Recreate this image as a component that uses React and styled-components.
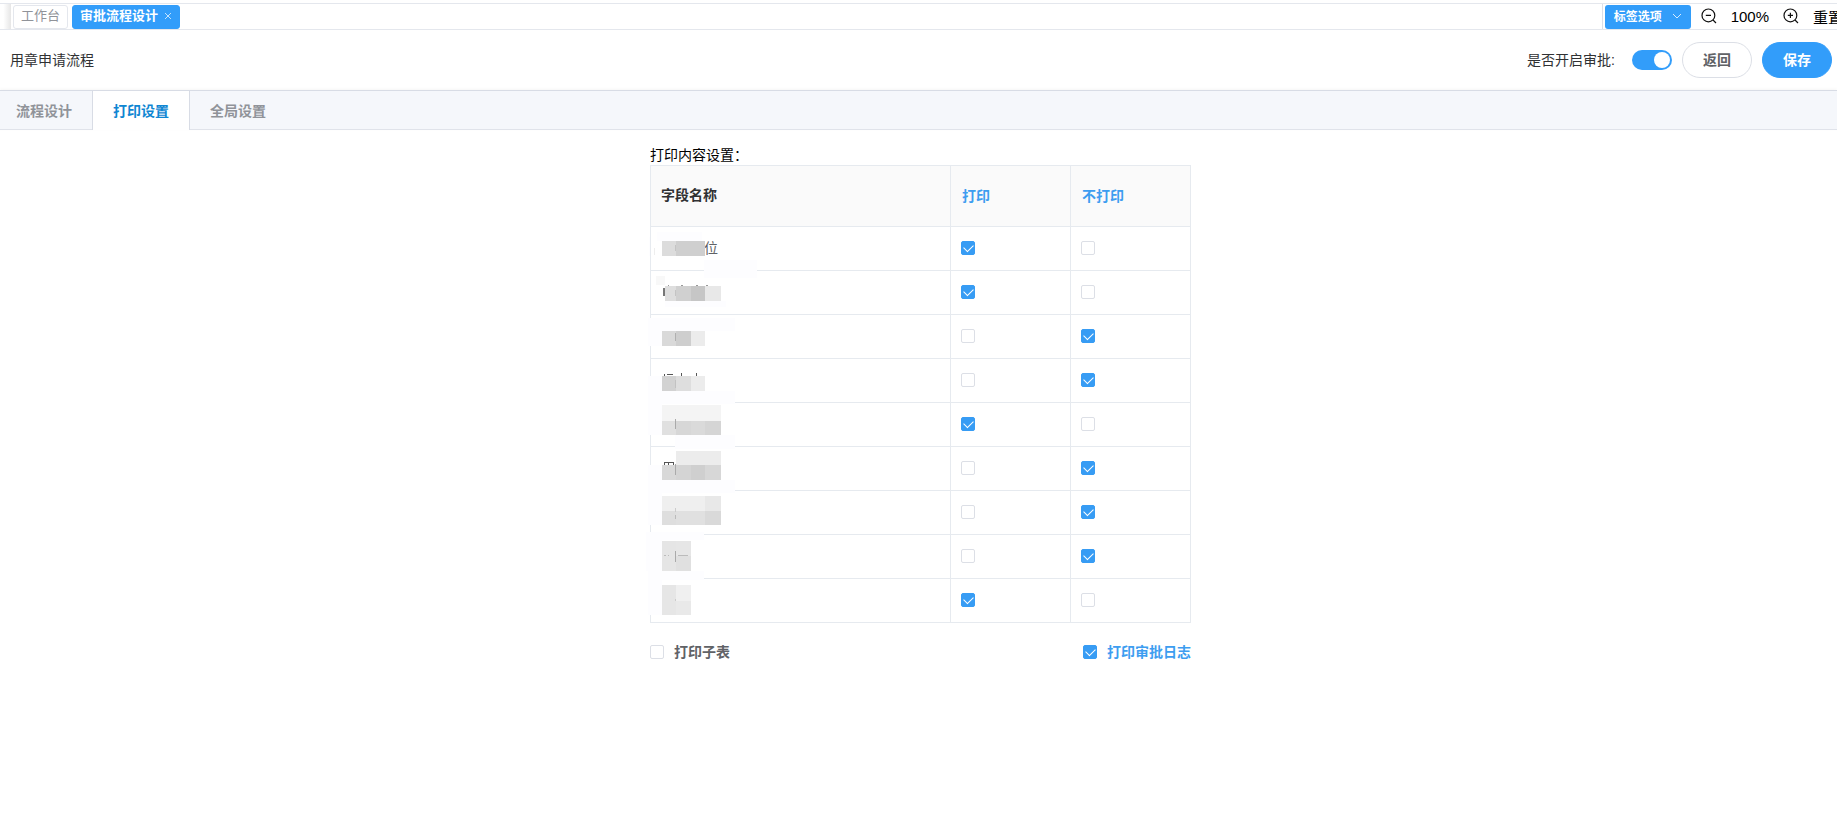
import React, { useState } from 'react';
import styled, { createGlobalStyle } from 'styled-components';

const GlobalStyle = createGlobalStyle`
  * {
    box-sizing: border-box;
  }

  body {
    margin: 0;
    background: #fff;
    color: #303133;
    font-family: 'Liberation Sans', 'Noto Sans CJK SC', sans-serif;
    font-size: 14px;
    line-height: 20px;
    overflow-x: hidden;
  }

  button,
  input {
    font-family: inherit;
    margin: 0;
  }
`;

const blue = '#329dfa';

const TagBar = styled.nav`
  display: flex;
  align-items: center;
  height: 27px;
  margin-top: 3px;
  border-top: 1px solid #e4e7ed;
  border-bottom: 1px solid #e4e7ed;
  overflow: hidden;
  white-space: nowrap;
`;

const ScrollEdge = styled.div`
  width: 11px;
  height: 25px;
  margin-right: 2px;
  background: linear-gradient(to right, #fff 30%, #e6e6e6);
`;

const Tag = styled.a`
  display: flex;
  align-items: center;
  gap: 6px;
  height: 24px;
  padding: 0 7px 2px;
  margin-right: 4px;
  border: 1px solid ${p => (p.$active ? blue : '#e4e7ed')};
  border-radius: 3px;
  background: ${p => (p.$active ? blue : '#fff')};
  color: ${p => (p.$active ? '#fff' : '#909399')};
  font-size: 13px;
  font-weight: ${p => (p.$active ? 700 : 400)};
  text-decoration: none;
`;

const TagTools = styled.div`
  display: flex;
  align-items: center;
  height: 25px;
  margin-left: auto;
  padding-left: 2px;
  border-left: 1px solid #dcdfe6;
`;

const TagOptions = styled.button`
  display: flex;
  align-items: center;
  justify-content: space-between;
  width: 86px;
  height: 24px;
  padding: 0 9px 2px;
  border: 0;
  border-radius: 3px;
  background: ${blue};
  color: #fff;
  font-size: 12px;
  font-weight: 700;
`;

const ZoomButton = styled.button`
  display: flex;
  width: 16px;
  height: 16px;
  padding: 0;
  margin: 0 14px 2px ${p => (p.$last ? 14 : 10)}px;
  border: 0;
  background: none;
  color: #111;
`;

const ZoomLevel = styled.span`
  color: #000;
  font-size: 15px;
`;

const ResetButton = styled.button`
  width: 24px;
  padding: 0;
  border: 0;
  background: none;
  color: #000;
  font-size: 15px;
  overflow: hidden;
  text-align: left;
  white-space: nowrap;
`;

const Header = styled.header`
  display: flex;
  align-items: center;
  gap: 10px;
  height: 60px;
  padding: 0 5px 0 10px;
`;

const Title = styled.h1`
  margin: 0 auto 0 0;
  font-size: 14px;
  font-weight: 400;
`;

const SwitchLabel = styled.label`
  display: flex;
  align-items: center;
  gap: 17px;
`;

const Switch = styled.input`
  appearance: none;
  display: flex;
  align-items: center;
  justify-content: flex-start;
  width: 40px;
  height: 20px;
  padding: 0 2px;
  border-radius: 10px;
  background: #dcdfe6;

  &::after {
    content: '';
    width: 16px;
    height: 16px;
    border-radius: 50%;
    background: #fff;
  }

  &:checked {
    justify-content: flex-end;
    background: ${blue};
  }
`;

const RoundButton = styled.button`
  width: 70px;
  height: 36px;
  padding: 0 0 2px;
  border: 1px solid ${p => (p.$primary ? blue : '#dcdfe6')};
  border-radius: 18px;
  background: ${p => (p.$primary ? blue : '#fff')};
  color: ${p => (p.$primary ? '#fff' : '#606266')};
  font-size: 14px;
  font-weight: 700;
`;

const Tabs = styled.nav`
  display: flex;
  height: 40px;
  padding-left: 16px;
  border-top: 1px solid #d8dce5;
  border-bottom: 1px solid #e0e3ea;
  background: #f5f7fb;
  box-shadow: 0 -1px 3px rgba(0, 0, 0, 0.04);
`;

const Tab = styled.button`
  height: 39px;
  padding: 0 20px 2px;
  border: solid #d8dce5;
  border-width: 0 ${p => (p.$active ? '1px' : 0)};
  background: ${p => (p.$active ? '#fff' : 'none')};
  color: ${p => (p.$active ? '#0f86d2' : '#909399')};
  font-size: 14px;
  font-weight: 700;

  &:first-child {
    padding-left: 0;
  }
`;

const Panel = styled.main`
  width: 545px;
  max-width: 100%;
  margin: 15px auto 0;
  padding-left: 4px;
`;

const PanelTitle = styled.h2`
  margin: 0;
  color: #000;
  font-size: 14px;
  font-weight: 400;
`;

const Table = styled.table`
  width: 100%;
  table-layout: fixed;
  border-collapse: separate;
  border-spacing: 0;
  border: solid #e6eaef;
  border-width: 1px 0 0 1px;
`;

const HeadCell = styled.th`
  width: ${p => (p.$wide ? 'auto' : '120px')};
  height: 61px;
  padding: ${p => (p.$wide ? '0 10px 2px' : '0 11px')};
  border: solid #e6eaef;
  border-width: 0 1px 1px 0;
  background: #fafafa;
  color: ${p => (p.$wide ? '#303133' : '#3d9df0')};
  text-align: left;
  font-weight: 700;
`;

const Cell = styled.td`
  position: relative;
  height: 44px;
  padding: 0 10px 2px;
  border: solid #e6eaef;
  border-width: 0 1px 1px 0;
  color: #606266;
`;

const Suffix = styled.span`
  padding-left: 43px;
`;

// Sits over the name cell and its left and bottom borders
const MaskSvg = styled.svg`
  position: absolute;
  left: -6px;
  top: -1px;
  pointer-events: none;
`;

const Checkbox = styled.input`
  appearance: none;
  display: grid;
  place-items: center;
  width: 14px;
  height: 14px;
  border: 1px solid #dcdfe6;
  border-radius: 2px;
  background: #fff;

  &:checked {
    border-color: #379cf4;
    background: #379cf4;
  }

  &:checked::after {
    content: '';
    width: 8px;
    height: 5px;
    margin-bottom: 2px;
    border: solid #fff;
    border-width: 0 0 1px 1px;
    transform: rotate(-45deg);
  }
`;

const Options = styled.div`
  display: flex;
  justify-content: space-between;
  margin-top: 19px;
`;

const Option = styled.label`
  display: flex;
  align-items: center;
  gap: 10px;
  color: ${p => (p.$checked ? '#3d9df0' : '#606266')};
  font-weight: 700;
`;

const veil = '#fdfdff';

// Blocks are [x, y, width, height, fill], measured from the row's top left corner
const initialRows = [
  {
    suffix: '位',
    print: true,
    blocks: [
      [-1, 11, 1, 19, veil],
      [4, 22, 1, 7, '#eee'],
      [7, 6, 45, 9, veil],
      [54, 34, 53, 18, veil],
      [12, 15, 14, 15, '#dcdcdc'],
      [26, 15, 29, 15, '#cfcfcf'],
      [25, 19, 1, 6, '#c4c4c4'],
    ],
  },
  {
    print: true,
    blocks: [
      [6, 6, 9, 9, '#f8f8f8'],
      [15, 31, 61, 6, veil],
      [13, 18, 2, 8, '#777'],
      [18, 15, 1, 1, '#999'],
      [31, 15, 2, 1, '#999'],
      [46, 15, 2, 1, '#999'],
      [56, 15, 2, 1, '#999'],
      [15, 16, 11, 15, '#dedede'],
      [26, 16, 15, 15, '#d0d0d0'],
      [41, 16, 14, 15, '#c6c6c6'],
      [55, 16, 16, 15, '#e8e8e8'],
      [25, 20, 1, 6, '#c4c4c4'],
    ],
  },
  {
    print: false,
    blocks: [
      [-2, 4, 87, 13, veil],
      [-2, 17, 14, 15, veil],
      [12, 17, 14, 15, '#d9d9d9'],
      [26, 17, 15, 15, '#cecece'],
      [41, 17, 14, 15, '#ececec'],
      [25, 19, 1, 8, '#b0b0b0'],
    ],
  },
  {
    print: false,
    blocks: [
      [-2, 18, 14, 15, veil],
      [-2, 33, 87, 13, veil],
      [14, 16, 1, 2, '#555'],
      [17, 16, 6, 1, '#555'],
      [31, 15, 1, 3, '#555'],
      [46, 15, 1, 3, '#555'],
      [12, 18, 14, 15, '#d2d2d2'],
      [26, 18, 15, 15, '#dedede'],
      [41, 18, 14, 15, '#ececec'],
      [25, 22, 1, 8, '#c2c2c2'],
    ],
  },
  {
    print: true,
    blocks: [
      [-2, 2, 14, 31, veil],
      [25, 33, 60, 14, veil],
      [12, 3, 59, 16, '#f4f4f4'],
      [12, 19, 14, 14, '#e0e0e0'],
      [26, 19, 15, 14, '#d7d7d7'],
      [41, 19, 14, 14, '#dadada'],
      [55, 19, 16, 14, '#d5d5d5'],
      [25, 17, 1, 10, '#aaa'],
    ],
  },
  {
    print: false,
    blocks: [
      [-2, 19, 14, 15, veil],
      [-2, 34, 87, 13, veil],
      [14, 16, 10, 1, '#555'],
      [14, 16, 1, 3, '#555'],
      [18, 16, 1, 3, '#555'],
      [23, 16, 1, 3, '#555'],
      [26, 5, 45, 14, '#ececec'],
      [12, 19, 14, 15, '#d8d8d8'],
      [26, 19, 15, 15, '#d4d4d4'],
      [41, 19, 14, 15, '#cfcfcf'],
      [55, 19, 16, 15, '#d7d7d7'],
      [25, 18, 1, 11, '#aaa'],
    ],
  },
  {
    print: false,
    blocks: [
      [-2, 2, 14, 33, veil],
      [-4, 42, 58, 8, veil],
      [12, 6, 43, 15, '#efefef'],
      [55, 6, 16, 15, '#e8e8e8'],
      [12, 21, 14, 14, '#dedede'],
      [26, 21, 29, 14, '#e0e0e0'],
      [55, 21, 16, 14, '#d9d9d9'],
      [25, 18, 1, 4, '#ccc'],
      [25, 25, 1, 4, '#bbb'],
    ],
  },
  {
    print: false,
    blocks: [
      [-4, 1, 16, 36, veil],
      [-2, 37, 56, 9, veil],
      [12, 7, 14, 30, '#e5e5e5'],
      [26, 7, 15, 15, '#e6e6e6'],
      [26, 22, 15, 15, '#e0e0e0'],
      [14, 21, 2, 1, '#bbb'],
      [18, 21, 1, 1, '#bbb'],
      [28, 21, 10, 1, '#bbb'],
      [25, 17, 1, 11, '#aaa'],
    ],
  },
  {
    print: true,
    blocks: [
      [-2, 1, 14, 36, veil],
      [12, 7, 14, 30, '#e6e6e6'],
      [26, 7, 15, 16, '#f0f0f0'],
      [26, 23, 15, 14, '#e9e9e9'],
      [25, 21, 1, 2, '#ccc'],
    ],
  },
];

const Mask = ({ blocks }) => (
  <MaskSvg width="120" height="52" viewBox="-5 0 120 52" shapeRendering="crispEdges" aria-hidden="true">
    {blocks.map(([x, y, width, height, fill], i) => (
      <rect key={i} x={x} y={y} width={width} height={height} fill={fill} />
    ))}
  </MaskSvg>
);

const Magnifier = ({ plus }) => (
  <svg width="16" height="16" viewBox="0 0 16 16" fill="none" stroke="currentColor" strokeWidth="1.2">
    <circle cx="7.4" cy="7.4" r="6.4" />
    <path d="M12 12L15 15M4.8 7.4H10" />
    {plus && <path d="M7.4 4.8V10" />}
  </svg>
);

export default function App() {
  const [enabled, setEnabled] = useState(true);
  const [rows, setRows] = useState(initialRows);
  const [printSub, setPrintSub] = useState(false);
  const [printLog, setPrintLog] = useState(true);

  const setPrint = (index, print) =>
    setRows(rows.map((row, i) => (i === index ? { ...row, print } : row)));

  return (
    <>
      <GlobalStyle />
      <TagBar>
        <ScrollEdge />
        <Tag href="#home">工作台</Tag>
        <Tag href="#flow" $active>
          审批流程设计
          <svg width="8" height="8" viewBox="0 0 8 8" stroke="#fff" strokeOpacity="0.7">
            <path d="M1 1L7 7M7 1L1 7" />
          </svg>
        </Tag>
        <TagTools>
          <TagOptions type="button">
            标签选项
            <svg width="10" height="6" viewBox="0 0 10 6" fill="none" stroke="#fff" strokeOpacity="0.8">
              <path d="M1 1L5 5L9 1" />
            </svg>
          </TagOptions>
          <ZoomButton type="button" aria-label="缩小">
            <Magnifier />
          </ZoomButton>
          <ZoomLevel>100%</ZoomLevel>
          <ZoomButton type="button" aria-label="放大" $last>
            <Magnifier plus />
          </ZoomButton>
          <ResetButton type="button">重置</ResetButton>
        </TagTools>
      </TagBar>
      <Header>
        <Title>用章申请流程</Title>
        <SwitchLabel>
          是否开启审批:
          <Switch
            type="checkbox"
            role="switch"
            checked={enabled}
            onChange={e => setEnabled(e.target.checked)}
          />
        </SwitchLabel>
        <RoundButton type="button">返回</RoundButton>
        <RoundButton type="button" $primary>
          保存
        </RoundButton>
      </Header>
      <Tabs>
        <Tab type="button">流程设计</Tab>
        <Tab type="button" $active>
          打印设置
        </Tab>
        <Tab type="button">全局设置</Tab>
      </Tabs>
      <Panel>
        <PanelTitle>打印内容设置：</PanelTitle>
        <Table>
          <thead>
            <tr>
              <HeadCell $wide>字段名称</HeadCell>
              <HeadCell>打印</HeadCell>
              <HeadCell>不打印</HeadCell>
            </tr>
          </thead>
          <tbody>
            {rows.map((row, i) => (
              <tr key={i}>
                <Cell>
                  {row.suffix && <Suffix>{row.suffix}</Suffix>}
                  <Mask blocks={row.blocks} />
                </Cell>
                <Cell>
                  <Checkbox
                    type="checkbox"
                    aria-label="打印"
                    checked={row.print}
                    onChange={() => setPrint(i, true)}
                  />
                </Cell>
                <Cell>
                  <Checkbox
                    type="checkbox"
                    aria-label="不打印"
                    checked={!row.print}
                    onChange={() => setPrint(i, false)}
                  />
                </Cell>
              </tr>
            ))}
          </tbody>
        </Table>
        <Options>
          <Option $checked={printSub}>
            <Checkbox type="checkbox" checked={printSub} onChange={e => setPrintSub(e.target.checked)} />
            打印子表
          </Option>
          <Option $checked={printLog}>
            <Checkbox type="checkbox" checked={printLog} onChange={e => setPrintLog(e.target.checked)} />
            打印审批日志
          </Option>
        </Options>
      </Panel>
    </>
  );
}
